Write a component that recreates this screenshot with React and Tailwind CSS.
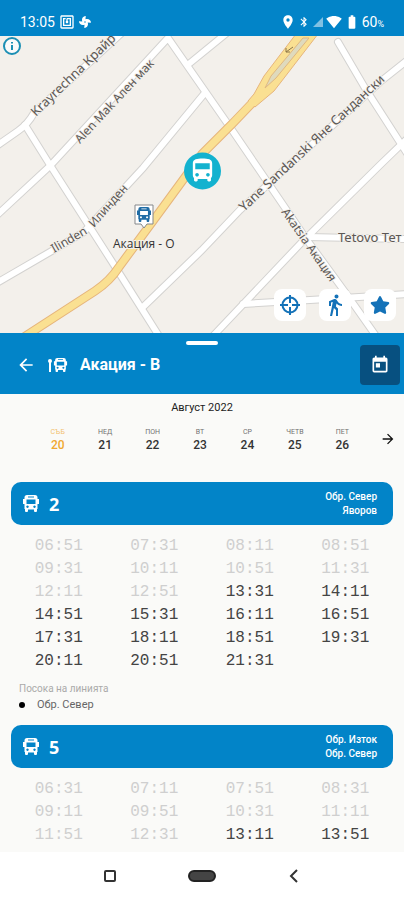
import {
  MdArrowBack,
  MdArrowForward,
  MdBatteryFull,
  MdBluetooth,
  MdDirectionsBus,
  MdDirectionsWalk,
  MdLocationOn,
  MdNfc,
  MdSignalCellular4Bar,
  MdSignalWifi4Bar,
  MdToday,
} from "react-icons/md";
import { FaFan, FaStar } from "react-icons/fa";

const days = [
  { name: "СЪБ", date: 20 },
  { name: "НЕД", date: 21 },
  { name: "ПОН", date: 22 },
  { name: "ВТ", date: 23 },
  { name: "СР", date: 24 },
  { name: "ЧЕТВ", date: 25 },
  { name: "ПЕТ", date: 26 },
];

const lines = [
  {
    number: "2",
    directions: ["Обр. Север", "Яворов"],
    times: [
      "06:51", "07:31", "08:11", "08:51",
      "09:31", "10:11", "10:51", "11:31",
      "12:11", "12:51", "13:31", "14:11",
      "14:51", "15:31", "16:11", "16:51",
      "17:31", "18:11", "18:51", "19:31",
      "20:11", "20:51", "21:31",
    ],
    legend: ["Обр. Север"],
  },
  {
    number: "5",
    directions: ["Обр. Изток", "Обр. Север"],
    times: [
      "06:31", "07:11", "07:51", "08:31",
      "09:11", "09:51", "10:31", "11:11",
      "11:51", "12:31", "13:11", "13:51",
    ],
    legend: [],
  },
];

const now = "13:05";

const streets = [
  "M-5 147 L18 131 Q28 124 34 113 L125 30",
  "M-5 217 L50 166 L168 38 L232 130 L262 174 L307 240 L345 292 L376 336",
  "M25 125 L50 165 L116 268 L159 336",
  "M-5 284 L50 252 L84 232 L143 168 L204 94",
  "M190 63 L228 32",
  "M143 307 L202 250 L240 210 L380 82 L410 58",
  "M338 42 L365 88 L410 158",
  "M213 336 L302 242 L380 165 L410 136",
  "M307 237 L410 239",
  "M243 304 L310 300 L410 294",
];

const mainRoad = "M24 337 L95 291 Q110 281 119 267 L150 225 L202 154 L232 124 L254 101";

function BusIcon(props) {
  return (
    <svg viewBox="0 0 16 17" fill="currentColor" aria-hidden="true" {...props}>
      <path
        fillRule="evenodd"
        d="M4 0h8q2.500 0 2.500 2.500V4H16v5h-1.500v5H14v2q0 1-1 1h-1q-1 0-1-1v-1.500H5V16q0 1-1 1H3q-1 0-1-1v-2h-.5V9H0V4h1.500V2.500Q1.500 0 4 0ZM5 1.500v1h6v-1ZM3.500 4.500V9h9V4.500ZM4.500 10.500a1.200 1.200 0 1 0 .01 0ZM11.500 10.500a1.200 1.200 0 1 0 .01 0Z"
      />
    </svg>
  );
}

function StatusBar() {
  return (
    <div className="flex h-9 items-end justify-between bg-[#0284c8] px-5 pb-1 text-white">
      <div className="flex items-center gap-1">
        <span className="text-sm">13:05</span>
        <MdNfc className="size-4" />
        <FaFan className="size-3" />
      </div>
      <div className="flex items-center gap-0.5">
        <MdLocationOn className="size-4" />
        <MdBluetooth className="size-3" />
        <MdSignalCellular4Bar className="size-3 opacity-50" />
        <MdSignalWifi4Bar className="size-4" />
        <MdBatteryFull className="size-4" />
        <span className="text-sm">
          60<span className="text-[9px]">%</span>
        </span>
      </div>
    </div>
  );
}

function MapDrawing() {
  return (
    <svg
      className="block size-full"
      viewBox="0 36 404 297"
      preserveAspectRatio="xMidYMid slice"
      fill="none"
      role="img"
      aria-label="Карта"
    >
      <rect x="-400" y="-100" width="1200" height="600" fill="#f3f0eb" />
      <g stroke="#d3d2d0" strokeWidth="8" strokeLinecap="round">
        {streets.map((d) => (
          <path key={d} d={d} />
        ))}
      </g>
      <g stroke="#ffffff" strokeWidth="6" strokeLinecap="round">
        {streets.map((d) => (
          <path key={d} d={d} />
        ))}
      </g>
      <path d={mainRoad} stroke="#e6b57c" strokeWidth="9" />
      <path
        d="M248 101 L254 94 L264 76 L296 34 L318 34 L281 82 L274 91 L255 107 Z"
        fill="#fae092"
        stroke="#e6b57c"
        strokeLinejoin="round"
      />
      <path d={mainRoad} stroke="#fae092" strokeWidth="7" />
      <path d="M265 88 L271 76 L303 38 L309 38 L276 78 Z" fill="#dfdabd" stroke="#dfb881" />
      <path d="M293 47 L286 52 M286 48 v4 h4" stroke="#8b7449" />
      <g
        className="font-['Noto_Sans',sans-serif] text-xs"
        fill="#5b5754"
        stroke="#f3f0eb"
        strokeWidth="2"
        paintOrder="stroke"
      >
        <text transform="translate(36 117) rotate(-44)" className="text-[13px]">
          Krayrechna Крайр
        </text>
        <text transform="translate(80 144) rotate(-47)">Alen Mak Ален мак</text>
        <text transform="translate(54 253) rotate(-30)">Ilinden</text>
        <text transform="translate(94 228) rotate(-49)">Илинден</text>
        <text transform="translate(244 212) rotate(-43)" className="text-[13px]">
          Yane Sandanski Яне Сандански
        </text>
        <text transform="translate(281 212) rotate(55)">Akatsia Акация</text>
        <text x="338" y="242" className="text-[13px]">Tetovo Тет</text>
        <text x="113" y="248" className="font-['Open_Sans',sans-serif]" fill="#333333">
          Акация - О
        </text>
      </g>
      <path d="M135 205 h18 v19 h-6 l-3 4 l-3 -4 h-6 Z" fill="#ffffff" stroke="#85888b" />
      <BusIcon x="137" y="207" width="14" height="15" color="#1f6ca5" />
      <circle cx="202.500" cy="171" r="18.500" fill="#13b2cf" />
      <MdDirectionsBus x="188" y="156" size={29} color="#ffffff" />
    </svg>
  );
}

function MapButton({ label, children }) {
  return (
    <button
      type="button"
      aria-label={label}
      className="flex size-8 items-center justify-center rounded-lg bg-white text-[#1472b8]"
    >
      {children}
    </button>
  );
}

function StopMap() {
  return (
    <section className="relative h-[297px] overflow-hidden">
      <MapDrawing />
      <button
        type="button"
        aria-label="Информация"
        className="absolute top-0 left-0.5 flex size-5 items-center justify-center text-[#1c8fb4]"
      >
        <svg viewBox="0 0 20 20" className="size-5" fill="none" stroke="currentColor" strokeWidth="2">
          <circle cx="10" cy="10" r="8" fill="#fafafa" />
          <path d="M10 9v5M10 6v1.500" />
        </svg>
      </button>
      <div className="absolute right-2 bottom-3 flex gap-[13px]">
        <MapButton label="Моето местоположение">
          <svg viewBox="0 0 24 24" className="size-6" fill="none" stroke="currentColor" strokeWidth="2">
            <circle cx="12" cy="12" r="7.500" />
            <path d="M12 2v8M12 14v8M2 12h8M14 12h8" />
          </svg>
        </MapButton>
        <MapButton label="Пешеходен маршрут">
          <MdDirectionsWalk className="size-6" />
        </MapButton>
        <MapButton label="Любими">
          <FaStar className="size-5" />
        </MapButton>
      </div>
    </section>
  );
}

function StopHeader() {
  return (
    <header className="relative flex items-center bg-[#0284c8] pt-3 pr-1 pb-[9px] pl-4 text-white">
      <span className="absolute top-2 left-1/2 h-1 w-8 -translate-x-1/2 rounded-full bg-white" />
      <button type="button" aria-label="Назад">
        <MdArrowBack className="size-5" />
      </button>
      <svg viewBox="0 0 20 16" className="ml-3 h-4 w-5" fill="currentColor" aria-hidden="true">
        <circle cx="2" cy="4" r="2" />
        <path d="M1 4h2v11H1z" />
        <BusIcon x="5" y="1" width="15" height="14" />
      </svg>
      <h1 className="ml-3 flex-1 text-base font-bold">Акация - В</h1>
      <button
        type="button"
        aria-label="Избор на дата"
        className="flex size-10 items-center justify-center rounded-sm bg-[#075080]"
      >
        <MdToday className="size-5" />
      </button>
    </header>
  );
}

function DayPicker() {
  return (
    <section>
      <h2 className="pt-1 text-center text-[11px] leading-5 text-[#222222]">Август 2022</h2>
      <div className="mt-2 flex items-center pr-2 pl-[34px]">
        <div className="grid flex-1 grid-cols-7">
          {days.map((day, i) => (
            <button
              key={day.date}
              type="button"
              className={`flex flex-col items-center ${i === 0 ? "text-[#f0a830]" : "text-[#333333]"}`}
            >
              <span className="text-[7px] leading-3 opacity-70">{day.name}</span>
              <span className="text-xs leading-3.5 font-medium">{day.date}</span>
            </button>
          ))}
        </div>
        <button type="button" aria-label="Следваща седмица" className="ml-3.5 text-[#111111]">
          <MdArrowForward className="size-4" />
        </button>
      </div>
    </section>
  );
}

function LineSchedule({ line }) {
  return (
    <section>
      <div className="flex h-[43px] items-center rounded-[10px] bg-[#0284c8] px-4 text-white">
        <BusIcon className="-ml-1 h-[17px] w-4" />
        <h3 className="ml-2.5 flex-1 font-['Noto_Sans',sans-serif] text-lg font-bold">{line.number}</h3>
        <div className="text-right text-[10px] leading-[14px] font-medium">
          {line.directions.map((direction) => (
            <p key={direction}>{direction}</p>
          ))}
        </div>
      </div>
      <ul className="mt-2.5 grid grid-cols-4 text-center font-['Liberation_Mono',monospace] text-base leading-[23px]">
        {line.times.map((time) => (
          <li key={time} className={time < now ? "text-[#cfcfcf]" : "text-[#444444]"}>
            {time}
          </li>
        ))}
      </ul>
      {line.legend.length > 0 && (
        <div className="mt-2 mb-3 px-2 text-[11px] leading-4 text-[#666666]">
          <p className="text-[10px] text-[#aaaaaa]">Посока на линията</p>
          {line.legend.map((item) => (
            <p key={item} className="flex items-center">
              <span className="size-1.5 rounded-full bg-black" />
              <span className="ml-3">{item}</span>
            </p>
          ))}
        </div>
      )}
    </section>
  );
}

function NavigationBar() {
  return (
    <nav className="grid h-12 grid-cols-[1fr_28px_1fr] items-center gap-16 bg-white">
      <button type="button" aria-label="Скорошни" className="justify-self-end">
        <span className="mr-2 block size-3 rounded-xs border-2 border-[#333333]" />
      </button>
      <button
        type="button"
        aria-label="Начало"
        className="h-3 w-7 rounded-full border-2 border-[#222222] bg-[#444444]"
      />
      <button type="button" aria-label="Обратно" className="justify-self-start">
        <svg viewBox="0 0 12 14" className="ml-2 h-3.5 w-3" fill="none" stroke="#333333" strokeWidth="2">
          <path d="M9 1L3 7l6 6" />
        </svg>
      </button>
    </nav>
  );
}

export default function App() {
  return (
    <div className="flex min-h-screen flex-col bg-[#fafaf8] font-[Roboto,sans-serif]">
      <StatusBar />
      <StopMap />
      <StopHeader />
      <main className="flex-1">
        <DayPicker />
        <div className="mt-[30px] px-[11px]">
          {lines.map((line) => (
            <LineSchedule key={line.number} line={line} />
          ))}
        </div>
      </main>
      <NavigationBar />
    </div>
  );
}
